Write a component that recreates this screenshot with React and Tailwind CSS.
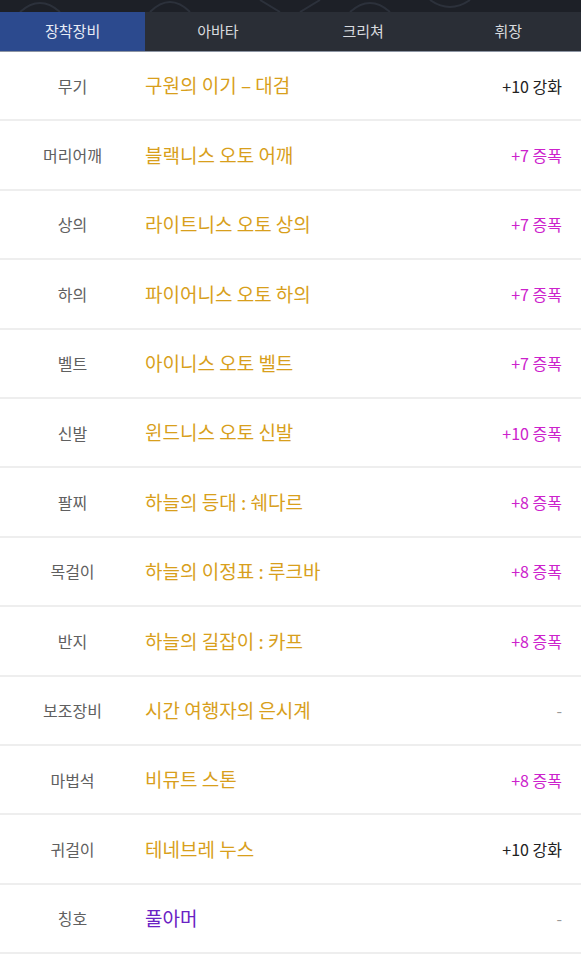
import React from "react";

const rows = [
  { label: "무기", name: "구원의 이기 – 대검", value: "+10 강화", type: "up" },
  { label: "머리어깨", name: "블랙니스 오토 어깨", value: "+7 증폭", type: "amp" },
  { label: "상의", name: "라이트니스 오토 상의", value: "+7 증폭", type: "amp" },
  { label: "하의", name: "파이어니스 오토 하의", value: "+7 증폭", type: "amp" },
  { label: "벨트", name: "아이니스 오토 벨트", value: "+7 증폭", type: "amp" },
  { label: "신발", name: "윈드니스 오토 신발", value: "+10 증폭", type: "amp" },
  { label: "팔찌", name: "하늘의 등대 : 쉐다르", value: "+8 증폭", type: "amp" },
  { label: "목걸이", name: "하늘의 이정표 : 루크바", value: "+8 증폭", type: "amp" },
  { label: "반지", name: "하늘의 길잡이 : 카프", value: "+8 증폭", type: "amp" },
  { label: "보조장비", name: "시간 여행자의 은시계", value: "-", type: "none" },
  { label: "마법석", name: "비뮤트 스톤", value: "+8 증폭", type: "amp" },
  { label: "귀걸이", name: "테네브레 누스", value: "+10 강화", type: "up" },
  { label: "칭호", name: "풀아머", value: "-", type: "none", purple: true },
];

const tabs = ["장착장비", "아바타", "크리쳐", "휘장"];

export default function App() {
  return (
    <div
      className="w-[581px] h-[960px] bg-white overflow-hidden"
      style={{ fontFamily: '"Noto Sans CJK KR", "Noto Sans", sans-serif' }}
    >
      <div className="h-[12px] bg-[#1d2027] overflow-hidden">
        <svg width="581" height="12" viewBox="0 0 581 12">
          <path d="M20 12 Q40 -6 60 12 M150 12 Q170 -8 190 12 M260 0 L280 12 M300 12 L320 0 M350 12 Q370 -6 390 12 M430 0 Q450 14 470 0" stroke="#2c313b" strokeWidth="2" fill="none" />
        </svg>
      </div>
      <div className="flex h-[40px] bg-[#2a2e36] border-b-[1px] border-[#8d95a3]">
        {tabs.map((t, i) => (
          <div
            key={t}
            className={`flex-1 flex items-center justify-center text-[15px] ${
              i === 0 ? "bg-[#2c4a8e] text-[#e8ecf5]" : "text-[#d8dade]"
            }`}
          >
            {t}
          </div>
        ))}
      </div>
      <div>
        {rows.map((r) => (
          <div
            key={r.label}
            className="flex items-center h-[69.4px] border-b-2 border-[#eeeeee]"
          >
            <div className="w-[145px] text-center text-[16px] text-[#606060]">{r.label}</div>
            <div
              className={`flex-1 text-[19px] ${r.purple ? "text-[#6a22c4]" : "text-[#d89f1c]"}`}
            >
              {r.name}
            </div>
            <div
              className={`pr-[19px] text-[16px] ${
                r.type === "up"
                  ? "text-[#222222]"
                  : r.type === "amp"
                  ? "text-[#cc22cc]"
                  : "text-[#999999]"
              }`}
            >
              {r.value}
            </div>
          </div>
        ))}
      </div>
    </div>
  );
}
